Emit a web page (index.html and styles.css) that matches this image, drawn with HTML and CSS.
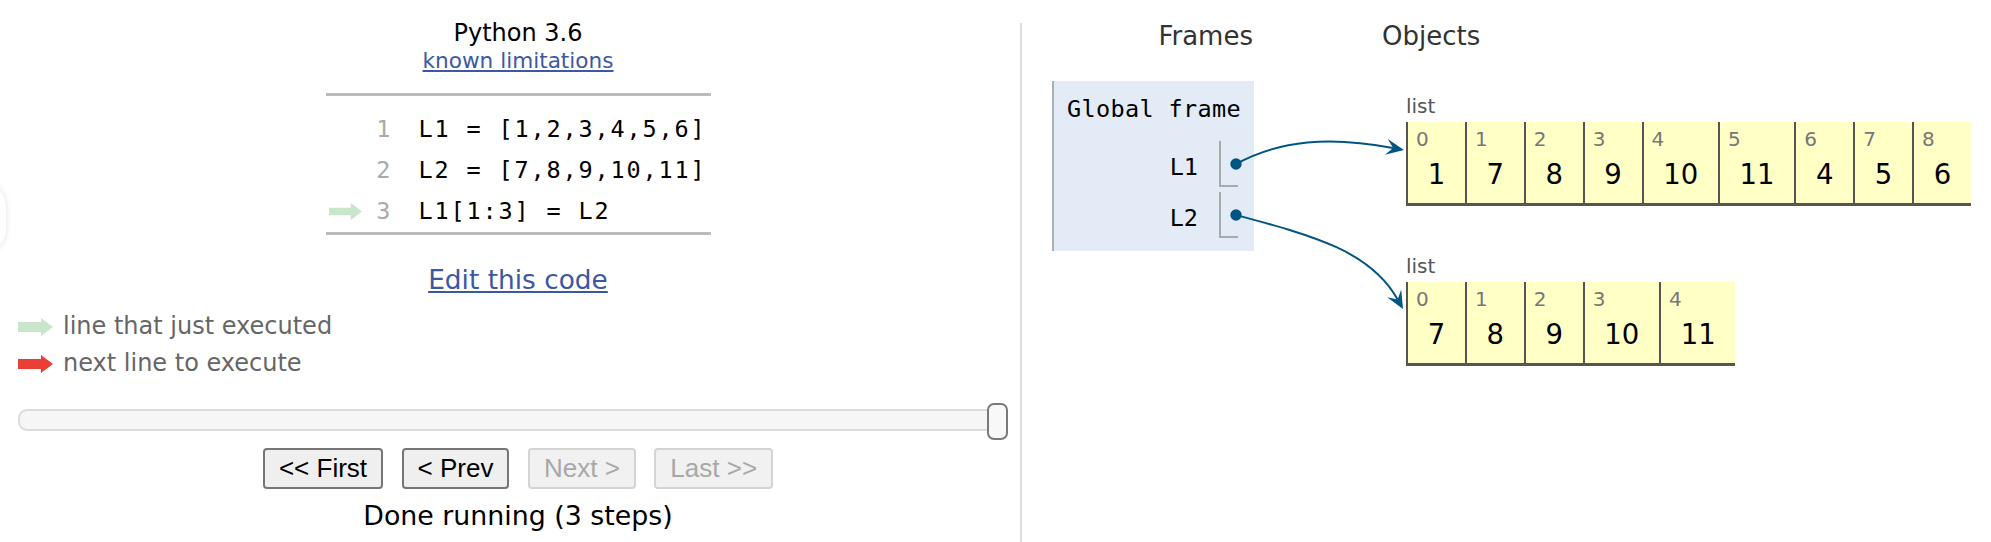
FILE: index.html
```html
<!DOCTYPE html>
<html>
<head>
<meta charset="utf-8">
<title>Python Tutor</title>
<link rel="stylesheet" href="styles.css">
</head>
<body>
<div class="edge-blob"></div>
<div class="page">
  <div class="left">
    <div class="lang">Python 3.6</div>
    <div class="limits"><a href="#">known limitations</a></div>
    <div class="code">
      <div class="row"><span class="gutter"></span><span class="ln">1</span><span class="src">L1 = [1,2,3,4,5,6]</span></div>
      <div class="row"><span class="gutter"></span><span class="ln">2</span><span class="src">L2 = [7,8,9,10,11]</span></div>
      <div class="row"><span class="gutter"><svg class="arrow" width="35" height="17" viewBox="0 0 35 18"><path d="M0 5 H23 V0 L35 9 L23 18 V13 H0 Z" fill="#c9e6ca"/></svg></span><span class="ln">3</span><span class="src">L1[1:3] = L2</span></div>
    </div>
    <div class="edit"><a href="#">Edit this code</a></div>
    <div class="legend">
      <div class="legend-row"><svg class="arrow" width="35" height="18" viewBox="0 0 35 18"><path d="M0 4 H23 V0 L35 9 L23 18 V14 H0 Z" fill="#c9e6ca"/></svg><span>line that just executed</span></div>
      <div class="legend-row"><svg class="arrow" width="35" height="18" viewBox="0 0 35 18"><path d="M0 4 H23 V0 L35 9 L23 18 V14 H0 Z" fill="#e93f34"/></svg><span>next line to execute</span></div>
    </div>
    <div class="slider"><div class="track"></div><div class="handle"></div></div>
    <div class="buttons">
      <button>&lt;&lt; First</button>
      <button>&lt; Prev</button>
      <button disabled>Next &gt;</button>
      <button disabled>Last &gt;&gt;</button>
    </div>
    <div class="done">Done running (3 steps)</div>
  </div>
  <div class="divider"></div>
  <div class="right">
    <div class="frames-col">
      <div class="hdr frames-hdr">Frames</div>
      <div class="frame">
        <div class="frame-title">Global frame</div>
        <div class="vars">
          <div class="var"><span class="vname">L1</span><span class="vval"></span></div>
          <div class="var"><span class="vname">L2</span><span class="vval"></span></div>
        </div>
      </div>
    </div>
    <div class="objects-col">
      <div class="hdr">Objects</div>
      <div class="heap">
        <div class="heap-obj first">
          <div class="type">list</div>
          <div class="list">
            <div class="cell"><div class="idx">0</div><div class="val">1</div></div>
            <div class="cell"><div class="idx">1</div><div class="val">7</div></div>
            <div class="cell"><div class="idx">2</div><div class="val">8</div></div>
            <div class="cell"><div class="idx">3</div><div class="val">9</div></div>
            <div class="cell"><div class="idx">4</div><div class="val">10</div></div>
            <div class="cell"><div class="idx">5</div><div class="val">11</div></div>
            <div class="cell"><div class="idx">6</div><div class="val">4</div></div>
            <div class="cell"><div class="idx">7</div><div class="val">5</div></div>
            <div class="cell"><div class="idx">8</div><div class="val">6</div></div>
          </div>
        </div>
        <div class="heap-obj second">
          <div class="type">list</div>
          <div class="list">
            <div class="cell"><div class="idx">0</div><div class="val">7</div></div>
            <div class="cell"><div class="idx">1</div><div class="val">8</div></div>
            <div class="cell"><div class="idx">2</div><div class="val">9</div></div>
            <div class="cell"><div class="idx">3</div><div class="val">10</div></div>
            <div class="cell"><div class="idx">4</div><div class="val">11</div></div>
          </div>
        </div>
      </div>
    </div>
  </div>
</div>
<svg class="arrows" width="1991" height="542" viewBox="0 0 1991 542">
  <path d="M1236 164 C1280 140, 1330 136, 1393 148" fill="none" stroke="#005583" stroke-width="2"/>
  <polygon points="1404,150 1384.9,154.7 1393.2,148 1387.7,138.9" fill="#005583"/>
  <path d="M1236 215 C1310 235, 1370 250, 1397.6 299.4" fill="none" stroke="#005583" stroke-width="2"/>
  <polygon points="1403,309 1387.2,297.2 1397.6,299.4 1401.2,289.4" fill="#005583"/>
  <circle cx="1236" cy="164" r="5.7" fill="#005583"/>
  <circle cx="1236" cy="215" r="5.7" fill="#005583"/>
</svg>
</body>
</html>
```

FILE: styles.css
```css
* { box-sizing: border-box; }
html, body { margin: 0; padding: 0; background: #fff; }
body {
  width: 1991px;
  height: 542px;
  overflow: hidden;
  position: relative;
  font-family: "DejaVu Sans", Verdana, sans-serif;
  color: #000;
}
a { color: #3d58a2; }

.page { display: flex; height: 542px; }

/* left panel */
.left {
  width: 1020px;
  flex: none;
  padding: 18px 2px 0 18px;
  display: flex;
  flex-direction: column;
}
.lang { font-size: 24px; line-height: 30px; text-align: center; }
.limits { font-size: 21.6px; line-height: 26px; text-align: center; }

.code {
  align-self: center;
  width: 385px;
  margin-top: 19px;
  padding-top: 13px;
  border-top: 3px solid #bbb;
  border-bottom: 3px solid #bbb;
  font-family: "DejaVu Sans Mono", monospace;
  font-size: 23.5px;
}
.row { display: flex; align-items: center; height: 41px; line-height: 41px; }
.gutter { width: 40px; height: 41px; display: flex; align-items: center; padding-left: 2px; }
.arrow { display: block; flex: none; }
.ln { width: 25px; text-align: right; color: #aaa; }
.src { margin-left: 28px; letter-spacing: 1.85px; white-space: pre; }

.edit { margin-top: 29px; font-size: 26.4px; line-height: 32px; text-align: center; }

.legend { margin-top: 12px; font-size: 24px; line-height: 37px; color: #666; }
.legend-row { display: flex; align-items: center; height: 37px; }
.legend-row .arrow { margin-right: 10px; }

.slider { position: relative; margin-top: 21px; width: 990px; height: 37px; }
.track {
  margin-top: 6px;
  height: 22px;
  border: 2px solid #dcdcdc;
  border-radius: 9px;
  background: #f6f6f6;
}
.handle {
  position: absolute;
  right: 0;
  top: 0;
  width: 21px;
  height: 37px;
  border: 2px solid #7a7a7a;
  border-radius: 7px;
  background: #f8f8f8;
}

.buttons { margin-top: 8px; display: flex; justify-content: center; gap: 18.5px; }
.buttons button {
  font-family: "Liberation Sans", Arial, sans-serif;
  font-size: 26px;
  height: 41px;
  padding: 0 14px;
  border: 2px solid #767676;
  border-radius: 4px;
  background: #efefef;
  color: #000;
}
.buttons button:disabled {
  color: #a8a8a8;
  border-color: #d4d4d4;
  background: #f1f1f1;
}

.done { margin-top: 11px; font-size: 26.8px; line-height: 32px; text-align: center; }

.divider { width: 2px; flex: none; margin-top: 23px; background: #ddd; }

/* right panel */
.right { display: flex; }
.frames-col { margin-left: 30px; width: 202px; flex: none; }
.hdr { font-size: 26px; line-height: 32px; color: #333; padding-top: 20px; white-space: nowrap; }
.frames-hdr { text-align: right; padding-right: 1px; }

.frame {
  margin-top: 29px;
  background: #e2ebf6;
  border-left: 2px solid #a6b3b6;
  padding: 13.4px 13px 13px 13px;
  font-family: "DejaVu Sans Mono", monospace;
  font-size: 23.5px;
}
.frame-title { line-height: 30px; letter-spacing: 0.35px; white-space: nowrap; }
.vars { margin-top: 16.6px; display: flex; flex-direction: column; gap: 5px; }
.var { display: flex; justify-content: flex-end; padding-right: 3px; }
.vname { line-height: 30px; padding-top: 11.4px; margin-right: 21px; }
.vval {
  width: 19px;
  height: 46px;
  border-left: 2px solid #aaa;
  border-bottom: 2px solid #aaa;
}

.objects-col { margin-left: 128px; }
.heap { margin-left: 24px; }
.heap-obj.first { margin-top: 41.1px; }
.heap-obj.second { margin-top: 47.1px; }
.type { font-size: 20px; line-height: 26px; color: #555; }
.list { margin-top: 3px; display: flex; }
.cell {
  height: 84px;
  padding-top: 5px;
  border-left: 2px solid #555;
  border-bottom: 3px solid #555;
  background: #ffffc6;
}
.idx { font-size: 20px; line-height: 24px; color: #777; padding-left: 8px; }
.val { font-size: 27.5px; line-height: 46px; padding: 0 19.7px; text-align: center; }

.arrows { position: absolute; left: 0; top: 0; pointer-events: none; }

.edge-blob {
  position: absolute;
  left: -44px;
  top: 182px;
  width: 50px;
  height: 72px;
  border-radius: 25px;
  background: #fff;
  box-shadow: 0 0 6px rgba(0, 0, 0, 0.12);
}
```
